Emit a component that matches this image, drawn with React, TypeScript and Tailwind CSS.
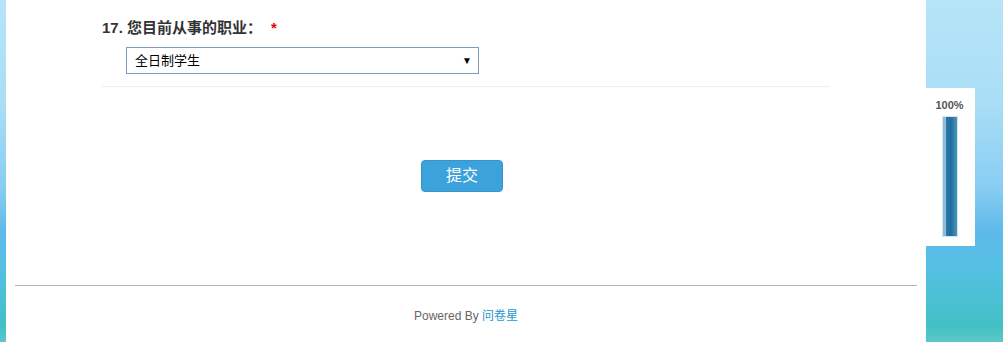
import React from 'react';

const App: React.FC = () => {
  return (
    <div
      className="flex h-[342px] w-full overflow-hidden bg-[linear-gradient(to_bottom,#b6e4f8_0%,#a9def6_30%,#88cdf2_55%,#5db9ea_68%,#55c0e3_78%,#42c0c6_95%,#5ec7c6_100%)]"
      style={{ fontFamily: '"Liberation Sans", "Noto Sans CJK SC", sans-serif' }}
    >
      {/* left edge of background */}
      <div className="w-[6px] shrink-0" />

      {/* Survey panel */}
      <div className="flex w-[920px] shrink-0 flex-col bg-white">
        <div className="pl-[96px] pt-[18px]">
          <div className="flex items-center text-[15px] font-bold leading-[20px] text-[#333]">
            <span>17. 您目前从事的职业：</span>
            <span className="ml-[9px] text-[#e00]">*</span>
          </div>

          <div className="mt-[9px] pl-[24px]">
            <div className="flex h-[27px] w-[353px] items-center justify-between border border-[#7f9db9] bg-white pl-[8px] pr-[6px] text-[13px] text-black">
              <span>全日制学生</span>
              <span className="text-[10px] leading-none">▼</span>
            </div>
          </div>

          <div className="mt-[12px] h-px w-[728px] bg-[#eeeeee]" />
        </div>

        {/* submit */}
        <div className="mt-[73px] flex justify-center pr-[8px]">
          <button className="h-[32px] w-[82px] rounded-[4px] border border-[#3a94c8] bg-[#3ca2db] text-[16px] text-white">
            提交
          </button>
        </div>

        {/* footer */}
        <div className="mx-[9px] mt-[93px] h-px bg-[#b5b5b5]" />
        <div className="mt-[21px] text-center text-[12px] text-[#666]">
          Powered By <span className="text-[#1d96cf]">问卷星</span>
        </div>
      </div>

      {/* progress widget */}
      <div className="pt-[88px]">
        <div className="flex h-[158px] w-[49px] flex-col items-center bg-white pr-[2px] pt-[10px]">
          <div className="text-[11px] font-bold leading-[14px] text-[#555]">100%</div>
          <div className="mt-[4px] h-[121px] w-[16px] border border-[#cfe6f2] bg-[linear-gradient(to_right,#8fbdd8_0%,#8fbdd8_18%,#2a78a8_25%,#1f6c9e_55%,#4d95bd_100%)]" />
        </div>
      </div>
    </div>
  );
};

export default App;
